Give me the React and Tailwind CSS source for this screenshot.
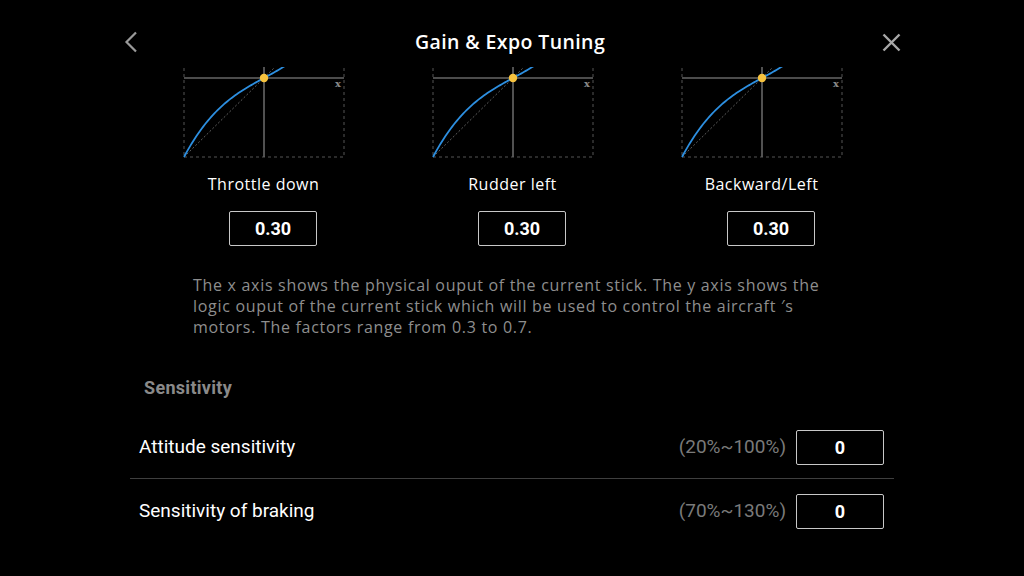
import React from "react";

const charts = [
  { label: "Throttle down", value: "0.30" },
  { label: "Rudder left", value: "0.30" },
  { label: "Backward/Left", value: "0.30" },
];

const rows = [
  { label: "Attitude sensitivity", range: "(20%~100%)", value: "0" },
  { label: "Sensitivity of braking", range: "(70%~130%)", value: "0" },
];

function expoPath(e = 0.45) {
  const pts = [];
  for (let i = 0; i <= 66; i++) {
    const X = -1 + i / 50;
    const Y = (1 - e) * X + e * X * X * X;
    pts.push(`${(80 + 80 * X).toFixed(2)},${(10 - 79 * Y).toFixed(2)}`);
  }
  return "M" + pts.join(" L");
}

function ExpoChart() {
  return (
    <svg width="162" height="92" viewBox="-1 -1 162 92" className="block overflow-hidden">
      {/* dashed frame */}
      <line x1="0" y1="0" x2="0" y2="89" stroke="#555" strokeWidth="1" strokeDasharray="3 3" />
      <line x1="160" y1="0" x2="160" y2="89" stroke="#555" strokeWidth="1" strokeDasharray="3 3" />
      <line x1="0" y1="89" x2="160" y2="89" stroke="#555" strokeWidth="1" strokeDasharray="3 3" />
      {/* axes */}
      <line x1="0" y1="10" x2="160" y2="10" stroke="#666" strokeWidth="1.6" />
      <line x1="80" y1="-1" x2="80" y2="89" stroke="#666" strokeWidth="1.6" />
      {/* linear reference */}
      <line x1="0" y1="89" x2="90" y2="0" stroke="#777" strokeWidth="0.8" strokeDasharray="2 2" />
      <path d={expoPath()} fill="none" stroke="#2d8fe0" strokeWidth="1.8" />
      <circle cx="80" cy="10" r="4.2" fill="#f6c23e" />
      <text x="154" y="19" fill="#8a8a8a" fontSize="10" fontWeight="700" fontFamily="'DejaVu Serif', serif" textAnchor="middle">
        x
      </text>
    </svg>
  );
}

export default function App() {
  return (
    <div className="w-[1024px] h-[576px] bg-black overflow-hidden font-['Open_Sans',sans-serif] text-white">
      {/* header */}
      <div className="h-[68px] pt-[31px]">
        <div className="h-[22px] flex items-center justify-between pl-[124px] pr-[123px]">
          <svg width="14" height="22" viewBox="0 0 14 22">
            <polyline points="12,1.5 2.5,11 12,20.5" fill="none" stroke="#9a9a9a" strokeWidth="2.2" />
          </svg>
          <div className="text-[19.5px] leading-[22px] font-semibold tracking-[0.4px]">Gain &amp; Expo Tuning</div>
          <svg width="19" height="19" viewBox="0 0 19 19">
            <path d="M1.5 1.5 L17.5 17.5 M17.5 1.5 L1.5 17.5" stroke="#a8a8a8" strokeWidth="2.4" />
          </svg>
        </div>
      </div>

      {/* charts */}
      <div className="ml-[139px] w-[747px] grid grid-cols-3 -mt-[1px]">
        {charts.map((c) => (
          <div key={c.label} className="flex flex-col items-center">
            <ExpoChart />
            <div className="mt-[15px] text-[16px] leading-[20px] font-medium tracking-[0.5px]">{c.label}</div>
            <div className="w-full flex justify-center pl-[19px] mt-[17px]">
              <div className="w-[88px] h-[35px] border border-[#c8c8c8] rounded-[2px] flex items-center justify-center font-['Roboto',sans-serif] font-bold text-[18px]">
                {c.value}
              </div>
            </div>
          </div>
        ))}
      </div>

      {/* description */}
      <p className="ml-[193px] mt-[29px] text-[16px] leading-[21px] text-[#8e8e8e] font-medium tracking-[0.7px] whitespace-nowrap">
        The x axis shows the physical ouput of the current stick. The y axis shows the
        <br />
        logic ouput of the current stick which will be used to control the aircraft ′s
        <br />
        motors. The factors range from 0.3 to 0.7.
      </p>

      {/* sensitivity */}
      <div className="ml-[144px] mt-[39px] font-['Roboto',sans-serif] font-bold text-[18px] leading-[22px] tracking-[0.3px] text-[#8a8a8a]">
        Sensitivity
      </div>
      <div className="ml-[130px] w-[764px] mt-[17px] font-['Roboto',sans-serif]">
        {rows.map((r, i) => (
          <div
            key={r.label}
            className={`flex items-center pl-[9px] pr-[10px] ${i === 0 ? "border-b border-[#3f3f3f] h-[63px]" : "h-[64px]"}`}
          >
            <div className="flex-1 text-[19px]">{r.label}</div>
            <div className="text-[19px] text-[#7a7a7a] mr-[10px]">{r.range}</div>
            <div className="w-[88px] h-[35px] border border-[#c8c8c8] rounded-[2px] flex items-center justify-center font-bold text-[18px]">
              {r.value}
            </div>
          </div>
        ))}
      </div>
    </div>
  );
}
